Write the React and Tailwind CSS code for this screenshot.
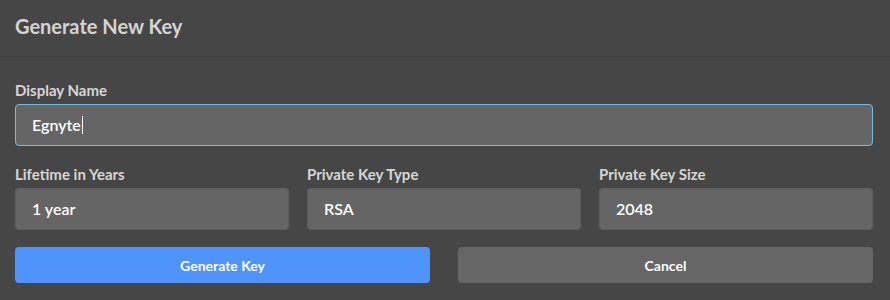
import React from "react";

function Field({ label, value, focused }) {
  return (
    <div className="flex flex-col flex-1">
      <label className="text-[15px] font-bold text-[#d6d6d6] leading-[18px] mb-[5px]">{label}</label>
      <div
        className={
          "h-[42px] rounded-[4px] bg-[#656565] flex items-center px-[16px] text-[16px] font-semibold text-white " +
          (focused ? "border border-[#7cb6e2]" : "border border-[#5f5f5f]")
        }
      >
        {value}
        {focused && <span className="w-px h-[18px] bg-white ml-px" />}
      </div>
    </div>
  );
}

export default function App() {
  return (
    <div className="w-[890px] h-[300px] bg-[#464646] font-['Lato','Noto_Sans',sans-serif]">
      {/* header */}
      <div className="h-[57px] border-b border-[#3e3e3e] flex items-center px-[15px]">
        <h1 className="text-[20px] font-bold text-[#d4d4d4] -mt-[4px]">Generate New Key</h1>
      </div>

      <div className="pl-[15px] pr-[17px] pt-[24px]">
        <Field label="Display Name" value="Egnyte" focused />

        <div className="flex gap-[18px] mt-[19px]">
          <Field label="Lifetime in Years" value="1 year" />
          <Field label="Private Key Type" value="RSA" />
          <Field label="Private Key Size" value="2048" />
        </div>

        <div className="flex gap-[28px] mt-[17px]">
          <button className="flex-1 h-[36px] rounded-[4px] bg-[#4f94fc] text-white text-[14px] font-bold">
            Generate Key
          </button>
          <button className="flex-1 h-[36px] rounded-[4px] bg-[#666666] text-white text-[14px] font-bold">
            Cancel
          </button>
        </div>
      </div>
    </div>
  );
}
